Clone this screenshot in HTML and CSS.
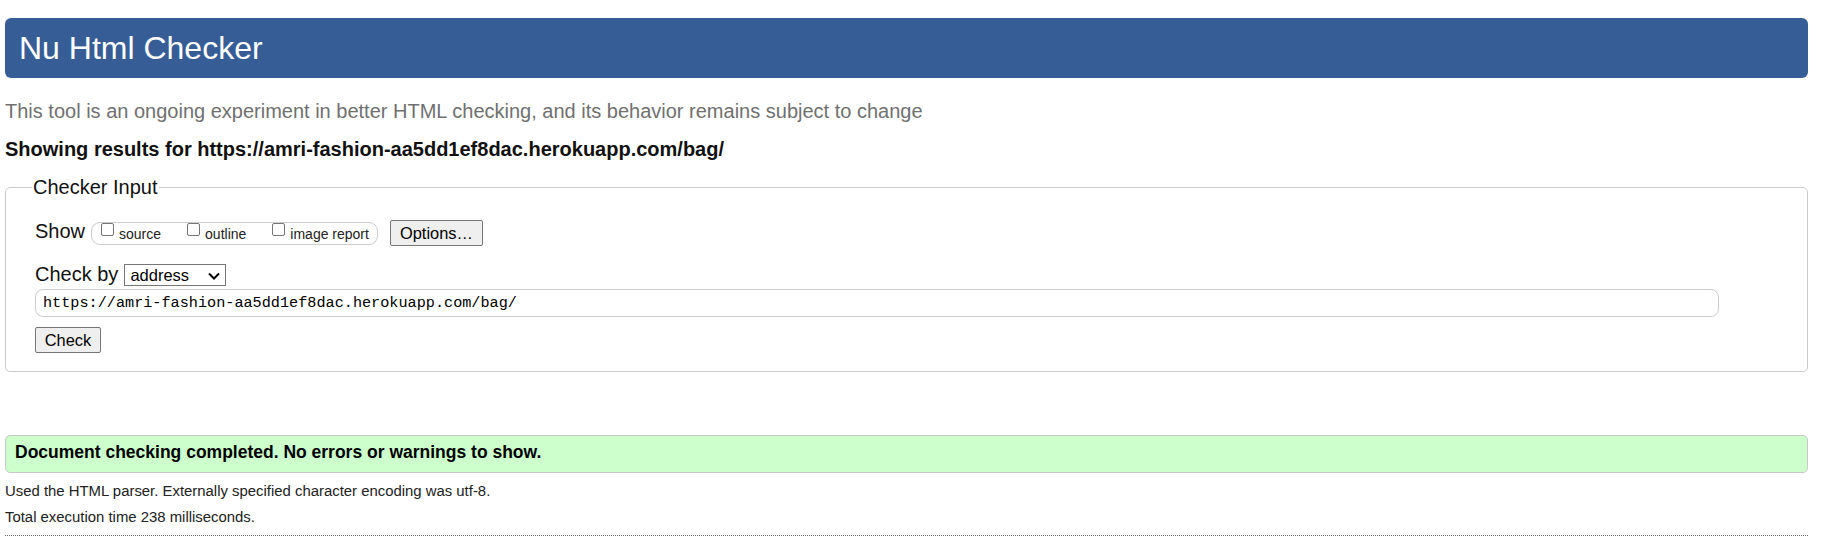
FILE: index.html
```html
<!DOCTYPE html>
<html lang="en">
<head>
<meta charset="utf-8">
<title>Showing results for https://amri-fashion-aa5dd1ef8dac.herokuapp.com/bag/ - Nu Html Checker</title>
<link rel="stylesheet" href="styles.css">
</head>
<body>
<h1 class="title">Nu Html Checker</h1>
<p class="subtitle">This tool is an ongoing experiment in better HTML checking, and its behavior remains subject to change</p>
<p class="results-for">Showing results for https://amri-fashion-aa5dd1ef8dac.herokuapp.com/bag/</p>
<form class="checker">
  <fieldset class="input-set">
    <legend class="input-legend">Checker Input</legend>
    <div class="row show-row">
      <span class="row-label">Show</span>
      <span class="opts">
        <label class="opt"><input type="checkbox" class="cb"><span>source</span></label>
        <label class="opt"><input type="checkbox" class="cb"><span>outline</span></label>
        <label class="opt last"><input type="checkbox" class="cb"><span>image report</span></label>
      </span>
      <button type="button" class="btn options-btn">Options…</button>
    </div>
    <div class="row checkby-row">
      <span class="row-label checkby-label">Check by</span>
      <span class="select-wrap">
        <select class="select"><option>address</option></select>
        <svg class="chev" width="12" height="8" viewBox="0 0 12 8"><path d="M1 1.5 L6 6.5 L11 1.5" fill="none" stroke="#000" stroke-width="2"/></svg>
      </span>
    </div>
    <input class="url" type="text" value="https://amri-fashion-aa5dd1ef8dac.herokuapp.com/bag/">
    <div class="submit-row"><button type="button" class="btn check-btn">Check</button></div>
  </fieldset>
</form>
<p class="success">Document checking completed. No errors or warnings to show.</p>
<p class="details">Used the HTML parser. Externally specified character encoding was utf-8.</p>
<p class="details">Total execution time 238 milliseconds.</p>
<hr class="rule">
</body>
</html>
```
FILE: styles.css
```css
html, body {
  background: #fff;
}
body {
  margin: 0;
  padding: 18px 30px 0 5px;
  font-family: "Liberation Sans", Arial, sans-serif;
  font-size: 20px;
  color: #000;
}
.title {
  margin: 0;
  height: 60px;
  box-sizing: border-box;
  padding: 0 14px;
  font-size: 32px;
  line-height: 60px;
  font-weight: normal;
  color: #fff;
  background: #365d95;
  border-radius: 6px;
}
.subtitle {
  margin: 22px 0 0;
  line-height: 23px;
  color: #707070;
}
.results-for {
  margin: 15px 0 0;
  line-height: 23px;
  font-weight: bold;
  color: #111;
}
.checker {
  margin: 15px 0 0;
}
.input-set {
  margin: 0;
  border: 1px solid #ccc;
  border-radius: 5px;
  padding: 21px 29px 18px 29px;
  min-width: 0;
}
.input-legend {
  margin-left: -3px;
  padding: 0 1px;
  line-height: 23px;
  color: #111;
}
.row {
  display: flex;
  align-items: flex-start;
}
.row-label {
  line-height: 23px;
  color: #111;
}
.show-row {
  height: 26px;
}
.opts {
  display: flex;
  align-items: stretch;
  box-sizing: border-box;
  height: 23px;
  margin: 2px 0 0 6px;
  padding: 0 8px 0 5px;
  border: 1px solid #ccc;
  border-radius: 9px;
  font-size: 14px;
  color: #222;
}
.opt {
  display: flex;
  align-items: center;
  margin-right: 22px;
}
.opt.last {
  margin-right: 0;
}
.cb {
  appearance: none;
  -webkit-appearance: none;
  align-self: flex-start;
  box-sizing: border-box;
  width: 13px;
  height: 13px;
  margin: 0 5px 0 4px;
  border: 1px solid #767676;
  border-radius: 2px;
  background: #fff;
}
.btn {
  box-sizing: border-box;
  height: 26px;
  margin: 0;
  padding: 0 9px;
  font-family: "Liberation Sans", Arial, sans-serif;
  font-size: 16.4px;
  color: #000;
  background: #efefef;
  border: 1px solid #767676;
  border-radius: 2px;
}
.options-btn {
  margin-left: 12px;
  width: 93px;
}
.checkby-row {
  margin-top: 16px;
}
.checkby-label {
  margin-top: 1px;
}
.select-wrap {
  position: relative;
  display: block;
  margin: 2px 0 0 6px;
}
.select {
  appearance: none;
  -webkit-appearance: none;
  display: block;
  box-sizing: border-box;
  width: 102px;
  height: 22px;
  margin: 0;
  padding: 0 0 0 5px;
  font-family: "Liberation Sans", Arial, sans-serif;
  font-size: 16.5px;
  color: #000;
  background: #fff;
  border: 1px solid #767676;
  border-radius: 0;
}
.chev {
  position: absolute;
  right: 6px;
  top: 8px;
  pointer-events: none;
}
.url {
  display: block;
  box-sizing: border-box;
  width: 1684px;
  height: 28px;
  margin: 3px 0 0;
  padding: 0 0 0 7px;
  font-family: "Liberation Mono", "DejaVu Sans Mono", monospace;
  font-size: 15.2px;
  color: #000;
  background: #fff;
  border: 1px solid #ccc;
  border-radius: 8px;
}
.submit-row {
  margin-top: 10px;
}
.check-btn {
  width: 66px;
  padding: 0;
}
.success {
  margin: 63px 0 0;
  padding: 6px 9px 10px;
  font-size: 17.5px;
  font-weight: bold;
  line-height: 20px;
  color: #000;
  background: #ccffcc;
  border: 1px solid #c8c8c8;
  border-radius: 5px;
}
.details {
  margin: 10px 0 0;
  font-size: 14.9px;
  line-height: 16px;
  color: #222;
}
.rule {
  margin: 10px 0 0;
  height: 0;
  border: 0;
  border-top: 1px dotted #666;
}
```
